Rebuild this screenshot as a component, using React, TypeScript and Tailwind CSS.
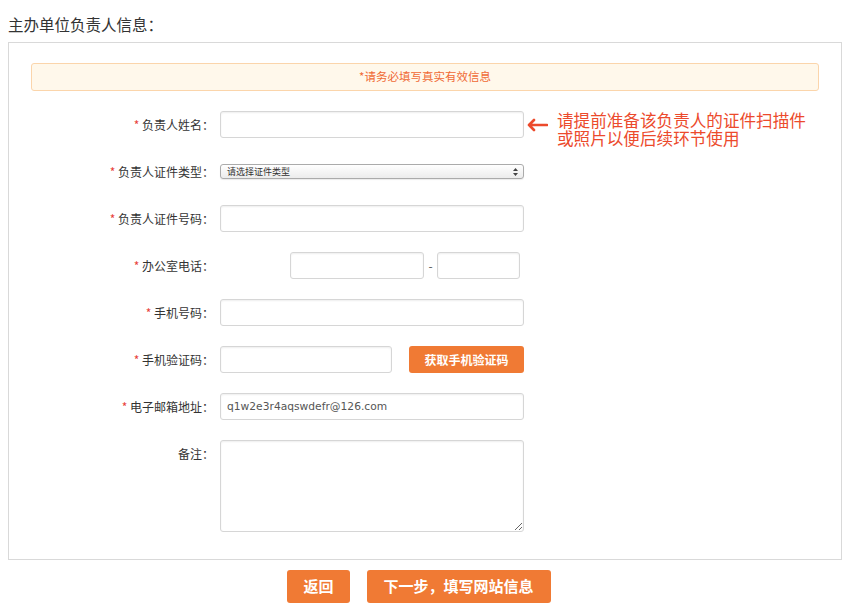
import React from 'react'

const cjk = "font-['Noto_Sans_CJK_SC','Noto_Sans',sans-serif]"
const inputCls =
  'h-[27px] rounded-[3px] border border-[#d6d6d6] bg-white shadow-[inset_0_1px_2px_rgba(0,0,0,0.07)] outline-none'

function Label({ text, required = true }: { text: string; required?: boolean }) {
  return (
    <div className="w-[205px] shrink-0 text-right text-[12px] leading-[27px] text-[#333]">
      {required && <span className="text-[#e8413a]">* </span>}
      {text}
    </div>
  )
}

function Row({ children, className = '' }: { children: React.ReactNode; className?: string }) {
  return <div className={`flex h-[27px] items-center ${className}`}>{children}</div>
}

export default function App() {
  return (
    <div className={`h-[616px] w-[860px] bg-white ${cjk}`}>
      {/* Title */}
      <div className="pl-2 pt-[14px] text-[15.5px] leading-[20px] text-[#333]">主办单位负责人信息：</div>

      {/* Form box */}
      <div className="ml-2 mt-[8px] w-[834px] border border-[#d9d9d9] pb-[27px] pt-[20px]">
        <div className="mx-[22px] flex h-[28px] items-center justify-center rounded-[3px] border border-[#fbd5ab] bg-[#fff8eb] text-[11.5px] text-[#f06a35]">
          *请务必填写真实有效信息
        </div>

        <div className="mt-[20px] flex flex-col gap-[20px]">
          <Row>
            <Label text="负责人姓名：" />
            <input className={`ml-[6px] w-[304px] ${inputCls}`} />
            <div className="ml-[2px] flex h-[27px] items-center">
              <svg width="22" height="14" viewBox="0 0 22 14">
                <path d="M21 7H3M8 2L3 7l5 5" fill="none" stroke="#ec4a2c" strokeWidth="2.6" strokeLinecap="round" strokeLinejoin="round" />
              </svg>
            </div>
            <div className="ml-[9px] flex flex-col self-start text-[16.6px] leading-[18px] text-[#ec4a2c]">
              <span>请提前准备该负责人的证件扫描件</span>
              <span>或照片以便后续环节使用</span>
            </div>
          </Row>

          <Row>
            <Label text="负责人证件类型：" />
            <div className="ml-[6px] flex h-[15px] w-[304px] items-center justify-between rounded-[3px] border border-[#ababab] bg-gradient-to-b from-white to-[#ececec] pl-[6px] pr-[5px] text-[9px] leading-none text-[#333] shadow-[0_1px_1px_rgba(0,0,0,0.08)]">
              <span>请选择证件类型</span>
              <svg width="5" height="8" viewBox="0 0 5 8">
                <path d="M2.5 0L5 3H0z M2.5 8L0 5h5z" fill="#444" />
              </svg>
            </div>
          </Row>

          <Row>
            <Label text="负责人证件号码：" />
            <input className={`ml-[6px] w-[304px] ${inputCls}`} />
          </Row>

          <Row>
            <Label text="办公室电话：" />
            <input className={`ml-[76px] w-[134px] ${inputCls}`} />
            <div className="w-[13px] text-center text-[12px] text-[#555]">-</div>
            <input className={`w-[83px] ${inputCls}`} />
          </Row>

          <Row>
            <Label text="手机号码：" />
            <input className={`ml-[6px] w-[304px] ${inputCls}`} />
          </Row>

          <Row>
            <Label text="手机验证码：" />
            <input className={`ml-[6px] w-[172px] ${inputCls}`} />
            <button className="ml-[17px] h-[27px] w-[115px] rounded-[3px] bg-[#f07a34] text-[12px] font-bold text-white">
              获取手机验证码
            </button>
          </Row>

          <Row>
            <Label text="电子邮箱地址：" />
            <input
              className={`ml-[6px] w-[304px] pl-[6px] font-['DejaVu_Sans',sans-serif] text-[10.7px] text-[#555] ${inputCls}`}
              defaultValue="q1w2e3r4aqswdefr@126.com"
            />
          </Row>

          <div className="flex items-start">
            <Label text="备注：" required={false} />
            <textarea className="ml-[6px] h-[92px] w-[304px] rounded-[3px] border border-[#d6d6d6] bg-white shadow-[inset_0_1px_2px_rgba(0,0,0,0.07)] outline-none" />
          </div>
        </div>
      </div>

      {/* Buttons */}
      <div className="ml-2 mt-[10px] flex w-[834px] justify-center gap-[17px] pr-[12px]">
        <button className="h-[33px] rounded-[3px] bg-[#f07a34] px-[16px] text-[15px] font-bold text-white">返回</button>
        <button className="h-[33px] rounded-[3px] bg-[#f07a34] px-[17px] text-[15px] font-bold text-white">
          下一步，填写网站信息
        </button>
      </div>
    </div>
  )
}
